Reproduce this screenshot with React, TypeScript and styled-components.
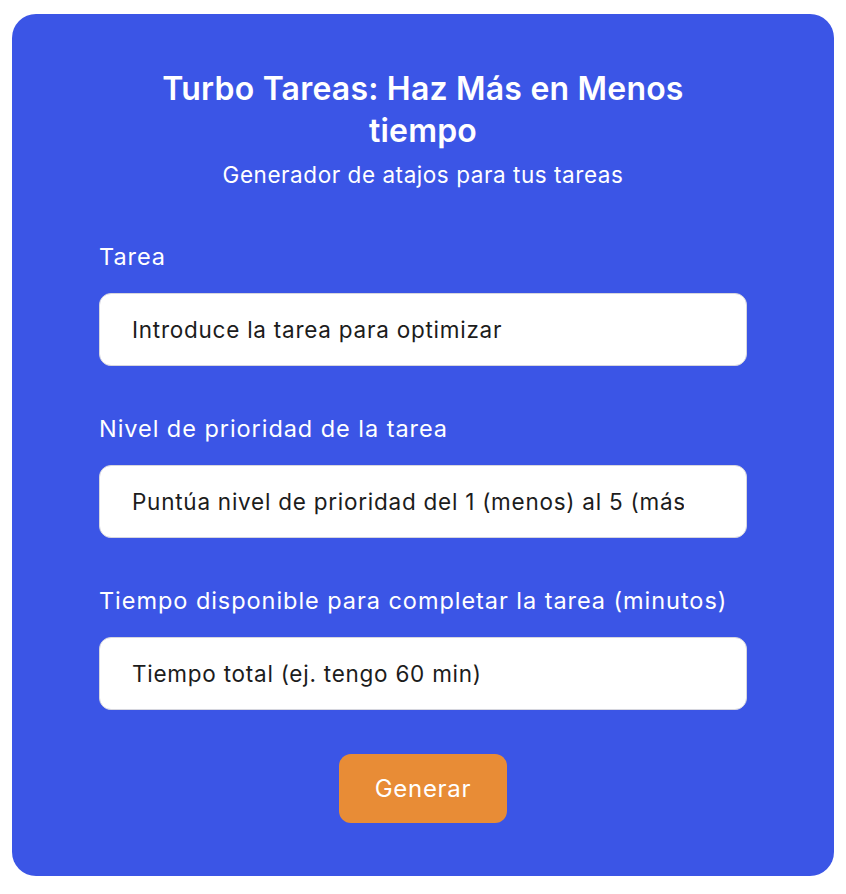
import React from "react";
import styled, { createGlobalStyle } from "styled-components";

const Global = createGlobalStyle`
  html, body { margin: 0; padding: 0; background: #ffffff; }
  body { font-family: "Inter", "Noto Sans", sans-serif; }
  * { box-sizing: border-box; }
`;

const Page = styled.div`
  padding: 14px 12px 18px 12px;
`;

const Card = styled.form`
  background: #3b55e6;
  border-radius: 24px;
  padding: 54px 87px 53px 87px;
  display: flex;
  flex-direction: column;
  align-items: stretch;
`;

const Title = styled.h1`
  margin: 0 auto;
  max-width: 560px;
  text-align: center;
  color: #ffffff;
  font-size: 32px;
  font-weight: 600;
  line-height: 42px;
  letter-spacing: 0.2px;
`;

const Subtitle = styled.p`
  margin: 8px 0 0 0;
  text-align: center;
  color: #ffffff;
  font-size: 22.5px;
  line-height: 30px;
  font-weight: 400;
  letter-spacing: 0.55px;
`;

const Fields = styled.div`
  margin-top: 52px;
  display: flex;
  flex-direction: column;
  gap: 48px;
`;

const Field = styled.div`
  display: flex;
  flex-direction: column;
  gap: 21px;
`;

const Label = styled.label`
  color: #ffffff;
  font-size: 23.5px;
  line-height: 30px;
  letter-spacing: 0.95px;
`;

const Input = styled.input`
  height: 73px;
  width: 100%;
  border: 1px solid #d6d6de;
  border-radius: 12px;
  background: #ffffff;
  padding: 0 62px 0 32px;
  font-family: inherit;
  font-size: 22.5px;
  letter-spacing: 0.75px;
  color: #1c1c1c;
  outline: none;
  &::placeholder { color: #1c1c1c; opacity: 1; }
`;

const Actions = styled.div`
  margin-top: 44px;
  display: flex;
  justify-content: center;
`;

const Button = styled.button`
  width: 168px;
  height: 69px;
  border: none;
  border-radius: 12px;
  background: #e88c36;
  color: #ffffff;
  font-family: inherit;
  font-size: 24px;
  letter-spacing: 0.7px;
  cursor: pointer;
`;

const fields = [
  { id: "tarea", label: "Tarea", placeholder: "Introduce la tarea para optimizar" },
  { id: "prioridad", label: "Nivel de prioridad de la tarea", placeholder: "Puntúa nivel de prioridad del 1 (menos) al 5 (más)" },
  { id: "tiempo", label: "Tiempo disponible para completar la tarea (minutos)", placeholder: "Tiempo total (ej. tengo 60 min)" },
];

export default function App() {
  return (
    <>
      <Global />
      <Page>
        <Card onSubmit={(e) => e.preventDefault()}>
          <Title>Turbo Tareas: Haz Más en Menos tiempo</Title>
          <Subtitle>Generador de atajos para tus tareas</Subtitle>
          <Fields>
            {fields.map((f) => (
              <Field key={f.id}>
                <Label htmlFor={f.id}>{f.label}</Label>
                <Input id={f.id} placeholder={f.placeholder} />
              </Field>
            ))}
          </Fields>
          <Actions>
            <Button type="submit">Generar</Button>
          </Actions>
        </Card>
      </Page>
    </>
  );
}
